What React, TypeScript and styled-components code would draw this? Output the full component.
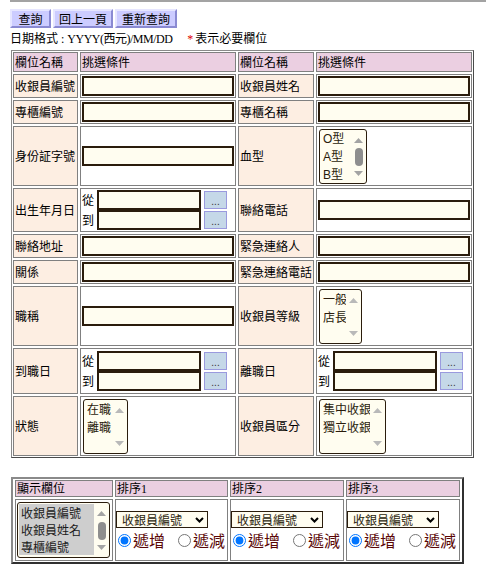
import React from 'react';
import styled, { createGlobalStyle } from 'styled-components';

const GlobalStyle = createGlobalStyle`
  html, body { margin: 0; padding: 0; background: #fff; }
  body {
    font-family: "Liberation Serif", "Noto Sans CJK TC", serif;
    font-size: 12px;
    color: #000;
  }
`;

const Page = styled.div`
  padding-left: 10px;
`;

const TopRule = styled.div`
  border-top: 2px solid #a3a3a3;
`;

const Toolbar = styled.div`
  display: flex;
  gap: 2px;
  margin-top: 7px;
`;

const ToolButton = styled.button<{ $w: number }>`
  box-sizing: border-box;
  width: ${(p) => p.$w}px;
  height: 19px;
  padding: 0;
  margin: 0;
  font-family: "Noto Sans CJK TC", sans-serif;
  font-size: 12px;
  line-height: 15px;
  color: #000;
  background: #ccccff;
  border: 2px solid;
  border-color: #e6e6ff #8a8ad2 #8a8ad2 #e6e6ff;
`;

const Note = styled.div`
  margin-top: 3px;
  line-height: 16px;
`;

const Latin = styled.span`
  letter-spacing: -0.5px;
`;

const Required = styled.span`
  color: #e00000;
  margin-left: 15px;
  margin-right: 2px;
`;

const FormGrid = styled.div`
  display: grid;
  grid-template-columns: 65px 156px 76px 156px;
  grid-template-rows: 20px 24px 24px 60px 44px 24px 24px 60px 46px 60px;
  gap: 2px;
  padding: 1px;
  width: max-content;
  margin: 3px 0 0 1px;
  border: 1px solid;
  border-color: #8a8a8a #4a4a4a #4a4a4a #8a8a8a;
`;

type Kind = 'head' | 'label' | 'field';

const bg: Record<Kind, string> = {
  head: '#ebcfe1',
  label: '#fdeee2',
  field: '#ffffff',
};

const Cell = styled.div<{ $kind: Kind }>`
  display: flex;
  align-items: center;
  min-width: 0;
  padding: 0 1px;
  border: 1px solid #808080;
  line-height: 14px;
  white-space: nowrap;
  font-family: "Noto Sans CJK TC", sans-serif;
  background: ${(p) => bg[p.$kind]};
`;

const TextInput = styled.input`
  box-sizing: border-box;
  width: 100%;
  height: 20px;
  margin: 0;
  padding: 0 2px;
  border: 2px solid #2a1c0c;
  background: #fffdf0;
  font: inherit;
  outline: none;
`;

const DateStack = styled.div`
  display: flex;
  flex-direction: column;
`;

const DateLine = styled.div`
  display: flex;
  align-items: center;
  height: 20px;
`;

const DateTag = styled.span`
  width: 12px;
  margin-right: 3px;
`;

const DateInput = styled(TextInput)`
  width: 104px;
`;

const PickButton = styled.button`
  box-sizing: border-box;
  width: 23px;
  height: 18px;
  margin: 0 0 0 3px;
  padding: 4px 0 0;
  border: 1px solid #9a9ade;
  background: #c5d8e8;
  color: #333;
  font-family: "Liberation Sans", sans-serif;
  font-size: 10px;
  line-height: 10px;
`;

/* ---------- list box (select size=3 look) ---------- */

const ListFrame = styled.div<{ $w: number; $h: number }>`
  box-sizing: border-box;
  display: flex;
  width: ${(p) => p.$w}px;
  height: ${(p) => p.$h}px;
  margin-left: 1px;
  border: 1px solid #2a1c0c;
  border-radius: 3px;
  background: #fffdf0;
  overflow: hidden;
`;

const ListOptions = styled.div<{ $top: number }>`
  flex: 1;
  min-width: 0;
  display: flex;
  flex-direction: column;
  padding: ${(p) => p.$top}px 0 0 1px;
  overflow: hidden;
`;

const ListOption = styled.div<{ $selected?: boolean; $row: number; $latin?: boolean }>`
  flex: none;
  height: ${(p) => p.$row}px;
  line-height: ${(p) => p.$row}px;
  padding-left: 2px;
  white-space: nowrap;
  font-family: ${(p) =>
    p.$latin
      ? '"Liberation Sans", "Noto Sans CJK TC", sans-serif'
      : '"Noto Sans CJK TC", sans-serif'};
  font-size: 12px;
  color: ${(p) => (p.$selected ? '#1a1a1a' : '#2a1c0c')};
  background: ${(p) => (p.$selected ? '#cecece' : 'transparent')};
`;

const ScrollBar = styled.div`
  flex: none;
  width: 15px;
  display: flex;
  flex-direction: column;
  align-items: center;
  padding: 8px 0 7px;
`;

const ScrollTrack = styled.div`
  flex: 1;
  display: flex;
  align-items: center;
  justify-content: center;
`;

const Thumb = styled.div`
  width: 8px;
  height: 18px;
  border-radius: 4px;
  background: #8e8e8e;
`;

function Arrow({ dir, color }: { dir: 'up' | 'down'; color: string }) {
  return (
    <svg width="9" height="5" viewBox="0 0 9 5">
      <polygon points={dir === 'up' ? '0,5 4.5,0 9,5' : '0,0 4.5,5 9,0'} fill={color} />
    </svg>
  );
}

function ListBox({
  width,
  height = 55,
  items,
  selectedAll,
  latin,
  row = 18,
  top = 0,
  scrollable,
}: {
  width: number;
  height?: number;
  items: string[];
  selectedAll?: boolean;
  latin?: boolean;
  row?: number;
  top?: number;
  scrollable?: boolean;
}) {
  const arrowColor = scrollable ? '#a3a3a3' : '#b9b9b9';
  return (
    <ListFrame $w={width} $h={height}>
      <ListOptions $top={top}>
        {items.map((it) => (
          <ListOption key={it} $row={row} $selected={selectedAll} $latin={latin}>
            {it}
          </ListOption>
        ))}
      </ListOptions>
      <ScrollBar>
        <Arrow dir="up" color={arrowColor} />
        <ScrollTrack>{scrollable && <Thumb />}</ScrollTrack>
        <Arrow dir="down" color={arrowColor} />
      </ScrollBar>
    </ListFrame>
  );
}

/* ---------- sort table ---------- */

const SortGrid = styled.div`
  display: grid;
  grid-template-columns: 98px 113px 114px 114px;
  grid-template-rows: 17px 62px;
  gap: 2px;
  padding: 1px 2px;
  width: max-content;
  margin: 19px 0 0 1px;
  border: 2px solid;
  border-color: #8a8a8a #303030 #303030 #8a8a8a;
`;

const SortCell = styled.div`
  display: flex;
  flex-direction: column;
  justify-content: center;
  align-items: flex-start;
  border: 1px solid #808080;
  gap: 3px;
`;

const DropWrap = styled.div`
  position: relative;
  width: 92px;
  height: 17px;
`;

const Dropdown = styled.select`
  appearance: none;
  box-sizing: border-box;
  width: 100%;
  height: 100%;
  margin: 0;
  padding: 0 0 0 5px;
  border: 1px solid #2a1c0c;
  border-radius: 0;
  background: #fffdf0;
  color: #2a1c0c;
  font-family: "Noto Sans CJK TC", sans-serif;
  font-size: 12px;
  line-height: 15px;
  outline: none;
`;

const Chevron = styled.svg`
  position: absolute;
  right: 4px;
  top: 6px;
  pointer-events: none;
`;

const RadioRow = styled.div`
  display: flex;
  align-items: center;
  height: 18px;
`;

const Radio = styled.input`
  width: 13px;
  height: 13px;
  margin: 0 2px 0 2px;
`;

const RadioText = styled.span`
  font-family: "Noto Sans CJK TC", sans-serif;
  font-size: 16px;
  line-height: 18px;
  color: #5a0606;
  margin-right: 11px;
  &:last-child { margin-right: 0; }
`;

const SortHead = styled(Cell)`
  font-family: "Liberation Serif", "Noto Sans CJK TC", serif;
`;

function DateRange() {
  return (
    <DateStack>
      <DateLine>
        <DateTag>從</DateTag>
        <DateInput />
        <PickButton>...</PickButton>
      </DateLine>
      <DateLine>
        <DateTag>到</DateTag>
        <DateInput />
        <PickButton>...</PickButton>
      </DateLine>
    </DateStack>
  );
}

function SortColumn({ name }: { name: string }) {
  return (
    <SortCell>
      <DropWrap>
        <Dropdown defaultValue="id">
          <option value="id">收銀員編號</option>
          <option value="name">收銀員姓名</option>
          <option value="counter">專櫃編號</option>
        </Dropdown>
        <Chevron width="9" height="6" viewBox="0 0 9 6">
          <polyline points="1,1 4.5,4.5 8,1" fill="none" stroke="#000" strokeWidth="2" />
        </Chevron>
      </DropWrap>
      <RadioRow>
        <Radio type="radio" name={name} defaultChecked />
        <RadioText>遞增</RadioText>
        <Radio type="radio" name={name} />
        <RadioText>遞減</RadioText>
      </RadioRow>
    </SortCell>
  );
}

const showFields = ['收銀員編號', '收銀員姓名', '專櫃編號'];

export default function App() {
  return (
    <>
      <GlobalStyle />
      <Page>
        <TopRule />
        <Toolbar>
          <ToolButton $w={41}>查詢</ToolButton>
          <ToolButton $w={60}>回上一頁</ToolButton>
          <ToolButton $w={62}>重新查詢</ToolButton>
        </Toolbar>
        <Note>
          日期格式 : <Latin>YYYY(西元)/MM/DD</Latin>
          <Required>*</Required>表示必要欄位
        </Note>
        <FormGrid>
          <Cell $kind="head">欄位名稱</Cell>
          <Cell $kind="head">挑選條件</Cell>
          <Cell $kind="head">欄位名稱</Cell>
          <Cell $kind="head">挑選條件</Cell>

          <Cell $kind="label">收銀員編號</Cell>
          <Cell $kind="field"><TextInput /></Cell>
          <Cell $kind="label">收銀員姓名</Cell>
          <Cell $kind="field"><TextInput /></Cell>

          <Cell $kind="label">專櫃編號</Cell>
          <Cell $kind="field"><TextInput /></Cell>
          <Cell $kind="label">專櫃名稱</Cell>
          <Cell $kind="field"><TextInput /></Cell>

          <Cell $kind="label">身份証字號</Cell>
          <Cell $kind="field"><TextInput /></Cell>
          <Cell $kind="label">血型</Cell>
          <Cell $kind="field">
            <ListBox width={48} items={['O型', 'A型', 'B型']} latin scrollable />
          </Cell>

          <Cell $kind="label">出生年月日</Cell>
          <Cell $kind="field"><DateRange /></Cell>
          <Cell $kind="label">聯絡電話</Cell>
          <Cell $kind="field"><TextInput /></Cell>

          <Cell $kind="label">聯絡地址</Cell>
          <Cell $kind="field"><TextInput /></Cell>
          <Cell $kind="label">緊急連絡人</Cell>
          <Cell $kind="field"><TextInput /></Cell>

          <Cell $kind="label">關係</Cell>
          <Cell $kind="field"><TextInput /></Cell>
          <Cell $kind="label">緊急連絡電話</Cell>
          <Cell $kind="field"><TextInput /></Cell>

          <Cell $kind="label">職稱</Cell>
          <Cell $kind="field"><TextInput /></Cell>
          <Cell $kind="label">收銀員等級</Cell>
          <Cell $kind="field">
            <ListBox width={43} items={['一般', '店長']} />
          </Cell>

          <Cell $kind="label">到職日</Cell>
          <Cell $kind="field"><DateRange /></Cell>
          <Cell $kind="label">離職日</Cell>
          <Cell $kind="field"><DateRange /></Cell>

          <Cell $kind="label">狀態</Cell>
          <Cell $kind="field">
            <ListBox width={45} items={['在職', '離職']} />
          </Cell>
          <Cell $kind="label">收銀員區分</Cell>
          <Cell $kind="field">
            <ListBox width={67} items={['集中收銀', '獨立收銀']} />
          </Cell>
        </FormGrid>

        <SortGrid>
          <SortHead $kind="head">顯示欄位</SortHead>
          <SortHead $kind="head">排序1</SortHead>
          <SortHead $kind="head">排序2</SortHead>
          <SortHead $kind="head">排序3</SortHead>
          <SortCell>
            <ListBox
              width={93}
              height={56}
              items={showFields}
              selectedAll
              row={17}
              top={1}
              scrollable
            />
          </SortCell>
          <SortColumn name="s1" />
          <SortColumn name="s2" />
          <SortColumn name="s3" />
        </SortGrid>
      </Page>
    </>
  );
}
